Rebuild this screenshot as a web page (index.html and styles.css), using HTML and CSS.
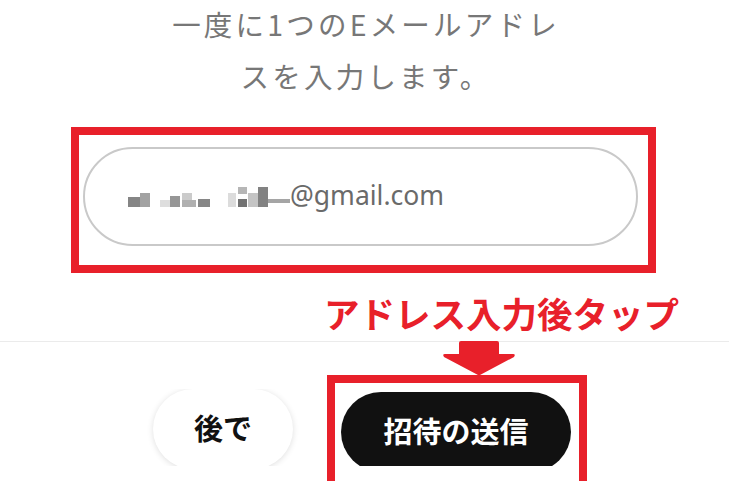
FILE: index.html
```html
<!DOCTYPE html>
<html lang="ja">
<head>
<meta charset="utf-8">
<title>招待</title>
<link rel="stylesheet" href="styles.css">
</head>
<body>
<div class="page">
  <p class="lead">一度に1つのEメールアドレ<br>スを入力します。</p>

  <div class="mark mark-input">
    <div class="pill">
      <span class="blur" aria-hidden="true">
        <i class="b b1"></i><i class="b b2"></i><i class="b b3"></i><i class="b b4"></i><i class="b b5"></i><i class="b b6"></i><i class="b b7"></i><i class="b b8"></i><i class="b b9"></i><i class="b b10"></i><i class="b b11"></i><i class="b b12"></i>
      </span><span class="email">@gmail.com</span>
    </div>
  </div>

  <div class="note">アドレス入力後タップ</div>

  <div class="footer">
    <div class="later-col">
      <div class="clip clip-later">
        <button class="btn btn-later">後で</button>
      </div>
    </div>
    <div class="send-col">
      <svg class="arrow" width="72" height="34" viewBox="0 0 72 34">
        <path d="M18 0 H54 Q56 0 56 2 V13 H70 Q73 13 71 16 L37 34 H35 L1 16 Q-1 13 2 13 H16 V2 Q16 0 18 0 Z" fill="#e8202a"/>
      </svg>
      <div class="mark mark-send">
        <div class="clip clip-send">
          <button class="btn btn-send">招待の送信</button>
        </div>
      </div>
    </div>
  </div>
</div>
</body>
</html>
```

FILE: styles.css
```css
* { box-sizing: border-box; }
html, body { margin: 0; padding: 0; background: #fff; }
body {
  font-family: "Noto Sans CJK JP", "Noto Sans", sans-serif;
  width: 729px;
  height: 481px;
  overflow: hidden;
}
.page { width: 729px; }

.lead {
  margin: -2px 0 0;
  text-align: center;
  font-size: 28.5px;
  line-height: 52px;
  letter-spacing: 3.2px;
  padding-left: 3px;
  color: #777;
  font-weight: 400;
}

.mark { border: 8px solid #e8202a; }

.mark-input {
  margin: 25px 0 0 71px;
  width: 585px;
  height: 146px;
  padding: 12px 0 0 4px;
}
.pill {
  width: 555px;
  height: 99px;
  border: 2px solid #c9c9c9;
  border-radius: 50px;
  display: flex;
  align-items: center;
  padding-left: 43px;
}
.blur {
  position: relative;
  display: inline-block;
  width: 162px;
  height: 24px;
  flex: none;
}
.b { position: absolute; display: block; }
.b1 { left: 0; top: 12px; width: 12px; height: 10px; background: #858585; }
.b2 { left: 12px; top: 8px; width: 10px; height: 14px; background: #a2a2a2; }
.b3 { left: 32px; top: 15px; width: 10px; height: 7px; background: #dedede; }
.b4 { left: 42px; top: 11px; width: 10px; height: 11px; background: #969696; }
.b5 { left: 54px; top: 8px; width: 10px; height: 7px; background: #cbcbcb; }
.b6 { left: 54px; top: 15px; width: 14px; height: 7px; background: #b0b0b0; }
.b7 { left: 70px; top: 14px; width: 12px; height: 8px; background: #868686; }
.b8 { left: 100px; top: 8px; width: 8px; height: 14px; background: #dcdcdc; }
.b9 { left: 110px; top: 2px; width: 9px; height: 7px; background: #b6b6b6; }
.b10 { left: 110px; top: 14px; width: 9px; height: 8px; background: #727272; }
.b11 { left: 120px; top: 8px; width: 10px; height: 14px; background: #c4c4c4; }
.b12 { left: 130px; top: 2px; width: 10px; height: 20px; background: #828282; }
.blur::after {
  content: "";
  position: absolute;
  left: 140px; top: 14px;
  width: 22px; height: 4px;
  background: #a5a5a5;
}
.email {
  font-family: "Noto Sans", "Noto Sans CJK JP", sans-serif;
  font-size: 26.5px;
  color: #6a6a6a;
  line-height: 1;
  padding-bottom: 2px;
}

.note {
  margin: 20px 0 0 324px;
  font-size: 35.5px;
  line-height: 40px;
  font-weight: 700;
  color: #e8202a;
  white-space: nowrap;
}

.footer {
  margin-top: 8px;
  border-top: 1px solid #ebebeb;
  display: flex;
  align-items: flex-start;
}
.later-col {
  margin-left: 145px;
  padding-top: 47px;
}
.clip {
  overflow: hidden;
}
.clip-later {
  height: 77px;
  padding: 0 8px;
}
.btn {
  display: block;
  border: 0;
  border-radius: 40px;
  height: 80px;
  font-family: "Noto Sans CJK JP", sans-serif;
  font-weight: 700;
  font-size: 29px;
  line-height: 1;
  padding: 0 0 4px;
  cursor: pointer;
}
.btn-later {
  width: 140px;
  background: #fff;
  color: #111;
  box-shadow: 0 1px 6px rgba(0,0,0,0.13);
}
.send-col {
  margin-left: 26px;
  display: flex;
  flex-direction: column;
}
.arrow {
  display: block;
  margin-left: 116px;
  margin-top: -1px;
}
.mark-send {
  width: 260px;
  height: 114px;
  padding: 9px 0 0 6px;
}
.clip-send { height: 74px; width: 232px; }
.btn-send {
  width: 230px;
  background: #111;
  color: #fff;
  font-weight: 700;
}
```
